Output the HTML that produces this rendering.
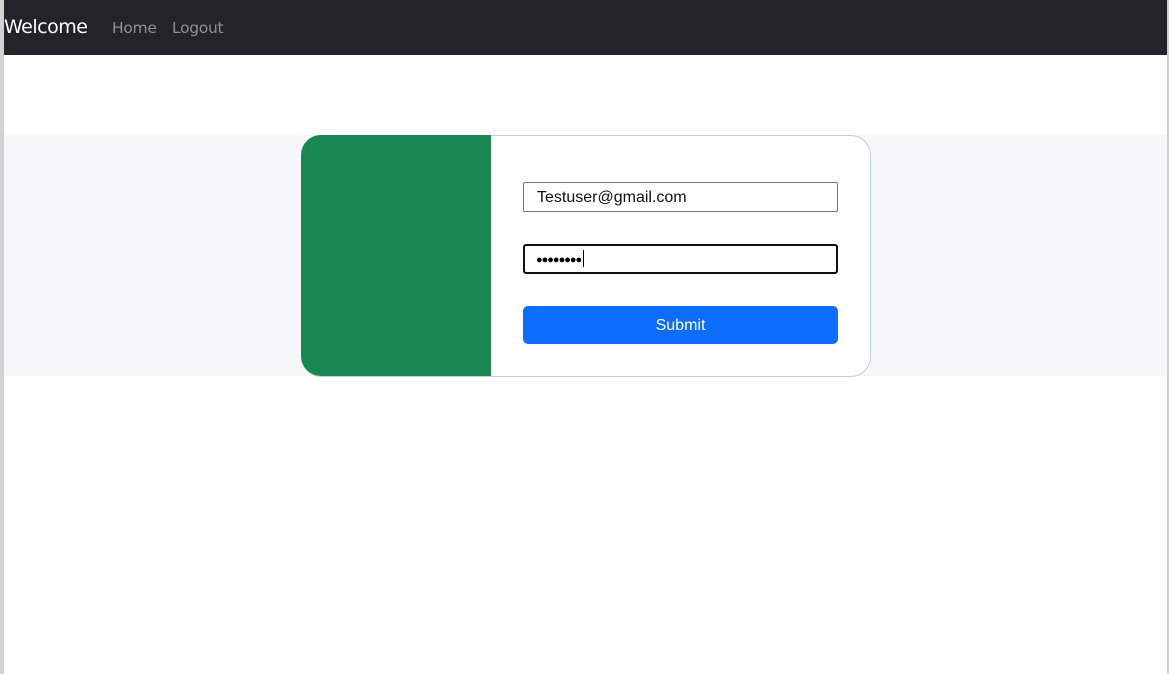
<!DOCTYPE html>
<html><head><meta charset="utf-8"><style>
*{box-sizing:border-box;margin:0;padding:0}
html,body{width:1169px;height:674px;overflow:hidden;background:#fff;font-family:"Liberation Sans",sans-serif}
.lb{position:absolute;left:0;top:0;width:4px;height:674px;background:#d2d2d2}
.rb{position:absolute;right:0;top:0;width:2px;height:674px;background:#cfcfcf}
.nav{position:absolute;left:4px;top:0;width:1163px;height:55px;background:#212529}
.brand{position:absolute;left:0;top:16px;color:#fff;font-family:"DejaVu Sans","Liberation Sans",sans-serif;font-size:19px;letter-spacing:-0.5px}
.l{position:absolute;top:19px;color:#8e9194;font-family:"DejaVu Sans","Liberation Sans",sans-serif;font-size:15.5px;letter-spacing:-0.3px}
.band{position:absolute;left:4px;top:135px;width:1163px;height:241px;background:#f5f6f7}
.card{position:absolute;left:301px;top:135px;width:570px;height:242px;border:1px solid #c8cfcc;border-radius:20px;background:#fff}
.green{position:absolute;left:301px;top:135px;width:190px;height:241px;background:#198754;border-radius:20px 0 0 20px}
.in1{position:absolute;left:221px;top:46px;width:315px;height:30px;border:1px solid #777;border-radius:2px;font-size:16px;padding:6px 13px 4px;color:#111}
.in2{position:absolute;left:221px;top:108px;width:315px;height:30px;border:2px solid #111;border-radius:3px;font-size:11px;padding:7px 11px;color:#000;letter-spacing:-1px}
.cur{display:inline-block;width:1px;height:17px;background:#000;vertical-align:middle;margin-left:2px;margin-top:-3px}
.btn{position:absolute;left:221px;top:170px;width:315px;height:38px;background:#0d6efd;border-radius:5px;color:#fff;font-size:16px;text-align:center;line-height:40px}
</style></head><body>
<div class="lb"></div><div class="rb"></div>
<div class="nav"><span class="brand">Welcome</span><span class="l" style="left:108px">Home</span><span class="l" style="left:168px">Logout</span></div>
<div class="band"></div>
<div class="card">
<div class="in1">Testuser@gmail.com</div>
<div class="in2">●●●●●●●●<span class="cur"></span></div>
<div class="btn">Submit</div>
</div>
<div class="green"></div>
</body></html>
